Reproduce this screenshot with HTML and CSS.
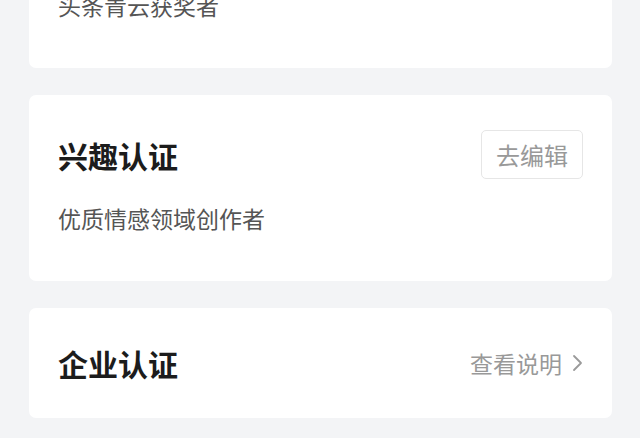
FILE: index.html
```html
<!DOCTYPE html>
<html>
  <head>
    <meta charset="utf-8">
    <title>认证信息</title>
    <link rel="stylesheet" href="styles.css">
  </head>
  <body>
    <div class="cert-list">
      <!-- 荣誉认证 -->
      <div class="card">
        <div class="card-head">
          <h2 class="card-title">荣誉认证</h2>
        </div>
        <p class="card-desc">头条青云获奖者</p>
      </div>

      <!-- 兴趣认证 -->
      <div class="card">
        <div class="card-head">
          <h2 class="card-title">兴趣认证</h2>
          <button class="edit-btn">去编辑</button>
        </div>
        <p class="card-desc">优质情感领域创作者</p>
      </div>

      <!-- 企业认证 -->
      <div class="card card-row">
        <h2 class="card-title">企业认证</h2>
        <a class="more-link" href="#">
          查看说明
          <svg width="11" height="18" viewBox="0 0 11 18">
            <polyline points="2,2 9,9 2,16" fill="none" stroke="#9a9a9a" stroke-width="1.8" stroke-linecap="round" stroke-linejoin="round" />
          </svg>
        </a>
      </div>
    </div>
  </body>
</html>
```

FILE: styles.css
```css
body {
  margin: 0;
  background-color: #f3f4f6;
  font-family: "Noto Sans CJK SC", "Noto Sans", sans-serif;
}
.cert-list {
  display: flex;
  flex-direction: column;
  gap: 27px;
  margin-top: -118px;
  padding: 0 28px 0 29px;
}
.card {
  background-color: #fff;
  border-radius: 7px;
  padding: 35px 29px 47px;
}
.card-head {
  display: flex;
  align-items: center;
  justify-content: space-between;
  height: 49px;
}
.card-title {
  margin: 0;
  font-size: 30px;
  font-weight: bold;
  color: #1c1c1c;
  line-height: 40px;
}
.card-desc {
  margin: 23px 0 0;
  font-size: 23px;
  line-height: 32px;
  color: #555;
}
.edit-btn {
  height: 49px;
  width: 102px;
  padding: 0;
  background-color: #fff;
  border: 1px solid #e6e6e6;
  border-radius: 5px;
  font-family: inherit;
  font-size: 24px;
  color: #999;
}
.card-row {
  display: flex;
  align-items: center;
  justify-content: space-between;
  height: 110px;
  padding: 0 29px;
  box-sizing: border-box;
}
.more-link {
  display: flex;
  align-items: center;
  gap: 10px;
  font-size: 23px;
  color: #999;
  text-decoration: none;
}
```
